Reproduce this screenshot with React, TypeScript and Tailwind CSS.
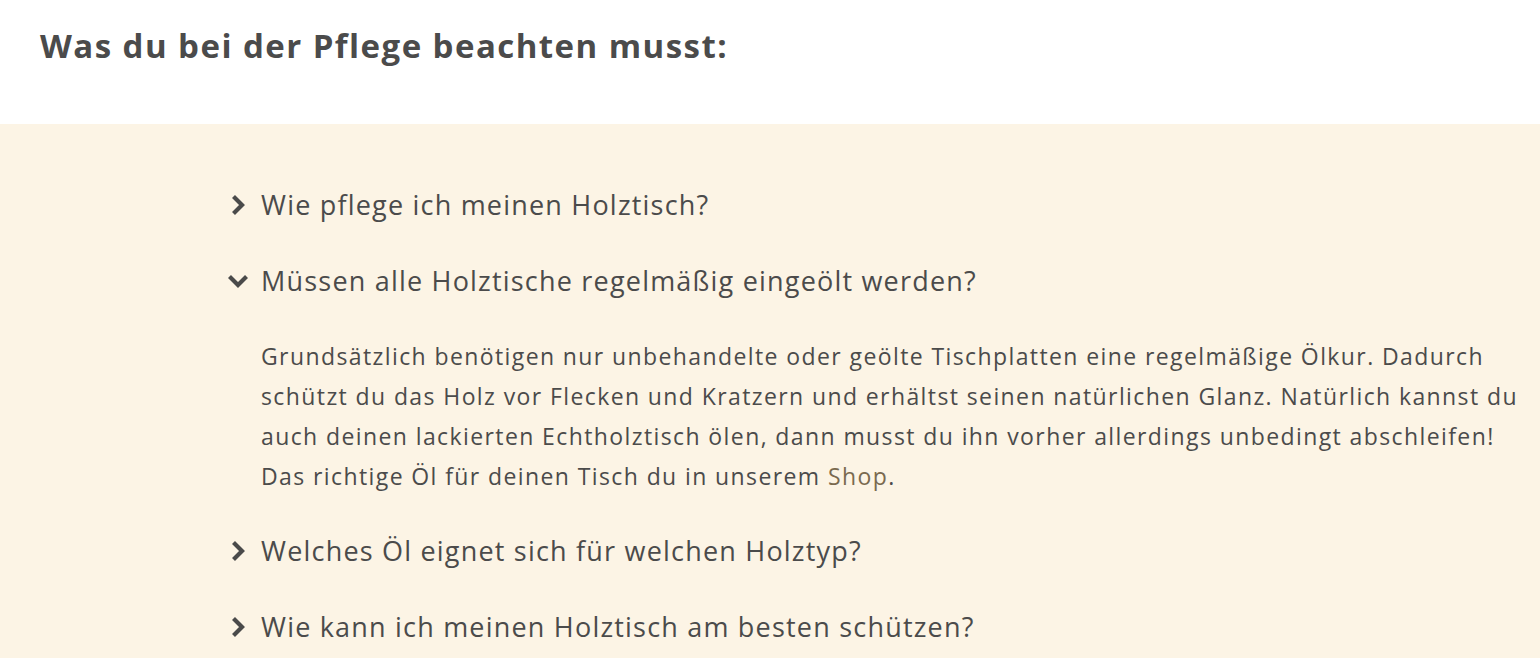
import React from "react";

const Chevron = ({ open }: { open?: boolean }) => (
  <svg width="24" height="24" viewBox="0 0 24 24" className="shrink-0">
    {open ? (
      <path d="M3.5 7.5 L12 16 L20.5 7.5" fill="none" stroke="#4a4a4a" strokeWidth="4.2" strokeLinecap="butt" strokeLinejoin="miter" />
    ) : (
      <path d="M7.5 3.5 L16 12 L7.5 20.5" fill="none" stroke="#4a4a4a" strokeWidth="4.2" strokeLinecap="butt" strokeLinejoin="miter" />
    )}
  </svg>
);

const Item = ({ q, open, children }: { q: string; open?: boolean; children?: React.ReactNode }) => (
  <div>
    <div className="flex items-center gap-[11px] h-[76px]">
      <Chevron open={open} />
      <span className="text-[27px] tracking-[1.2px]">{q}</span>
    </div>
    {children}
  </div>
);

export default function App() {
  return (
    <div className="w-[1540px] h-[658px] overflow-hidden bg-white text-[#4b4b4b]" style={{ fontFamily: "'Open Sans', sans-serif" }}>
      <div className="h-[124px] pl-[40px] pt-[22px]">
        <h2 className="text-[33px] font-bold leading-[48px] tracking-[1.45px]">Was du bei der Pflege beachten musst:</h2>
      </div>
      <div className="bg-[#fcf4e5] h-[534px] pl-[226px] pt-[43px]">
        <Item q="Wie pflege ich meinen Holztisch?" />
        <Item q="Müssen alle Holztische regelmäßig eingeölt werden?" open>
          <p className="pl-[35px] text-[23px] leading-[40px] tracking-[1.4px] pt-[17px] pb-[17px] whitespace-nowrap">
            Grundsätzlich benötigen nur unbehandelte oder geölte Tischplatten eine regelmäßige Ölkur. Dadurch
            <br />
            schützt du das Holz vor Flecken und Kratzern und erhältst seinen natürlichen Glanz. Natürlich kannst du
            <br />
            auch deinen lackierten Echtholztisch ölen, dann musst du ihn vorher allerdings unbedingt abschleifen!
            <br />
            Das richtige Öl für deinen Tisch du in unserem <a className="text-[#7a6a4f]">Shop</a>.
          </p>
        </Item>
        <Item q="Welches Öl eignet sich für welchen Holztyp?" />
        <Item q="Wie kann ich meinen Holztisch am besten schützen?" />
      </div>
    </div>
  );
}
